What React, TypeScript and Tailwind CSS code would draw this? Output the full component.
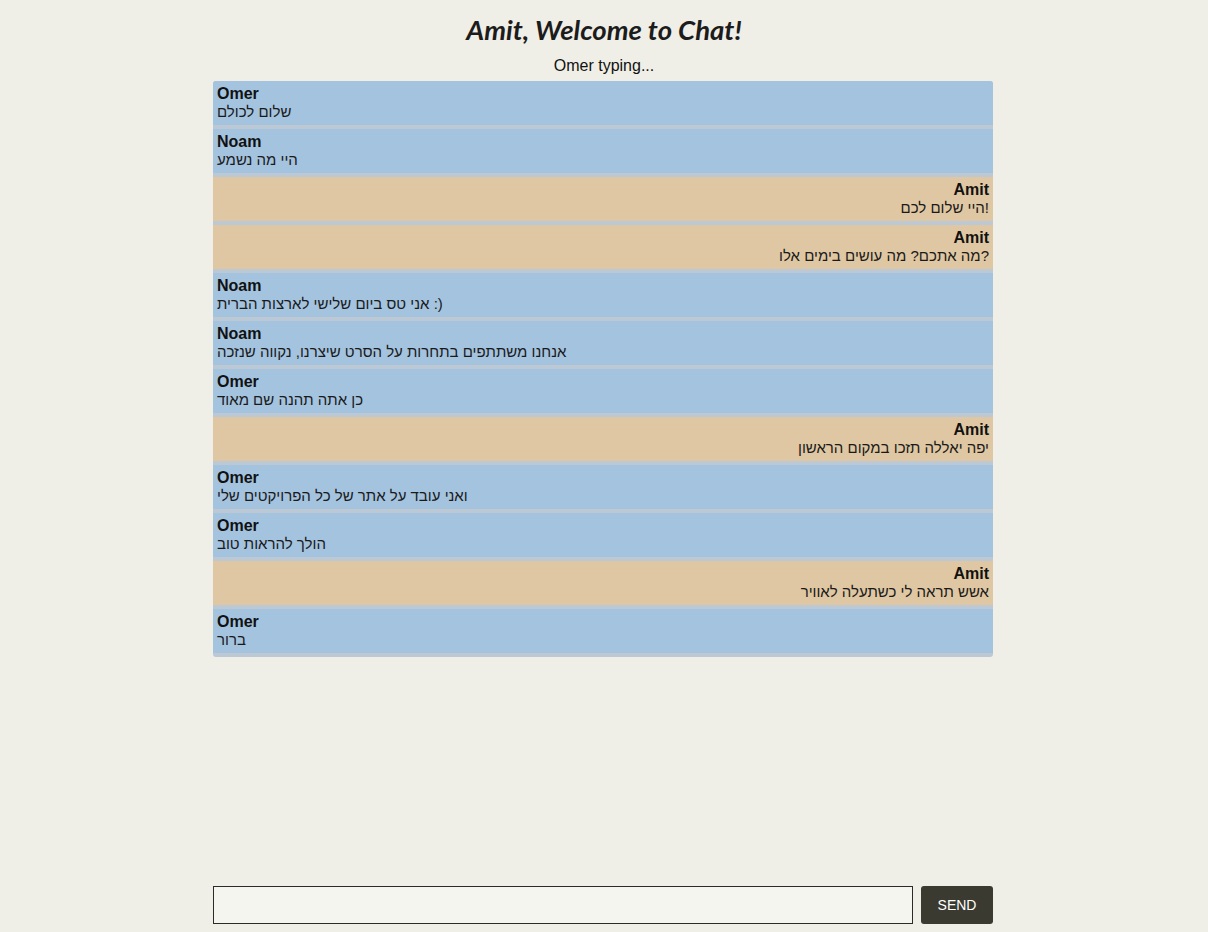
import React from "react";

type Msg = { name: string; text: string; mine: boolean };

const messages: Msg[] = [
  { name: "Omer", text: "שלום לכולם", mine: false },
  { name: "Noam", text: "היי מה נשמע", mine: false },
  { name: "Amit", text: "היי שלום לכם!", mine: true },
  { name: "Amit", text: "מה אתכם? מה עושים בימים אלו?", mine: true },
  { name: "Noam", text: "אני טס ביום שלישי לארצות הברית :)", mine: false },
  { name: "Noam", text: "אנחנו משתתפים בתחרות על הסרט שיצרנו, נקווה שנזכה", mine: false },
  { name: "Omer", text: "כן אתה תהנה שם מאוד", mine: false },
  { name: "Amit", text: "יפה יאללה תזכו במקום הראשון", mine: true },
  { name: "Omer", text: "ואני עובד על אתר של כל הפרויקטים שלי", mine: false },
  { name: "Omer", text: "הולך להראות טוב", mine: false },
  { name: "Amit", text: "אשש תראה לי כשתעלה לאוויר", mine: true },
  { name: "Omer", text: "ברור", mine: false },
];

export default function App() {
  return (
    <div
      className="h-screen bg-[#f0efe7] flex flex-col items-center text-[#1a1a1a]"
      style={{ fontFamily: '"Liberation Sans", Arial, "Noto Sans Hebrew", sans-serif' }}
    >
      <h1
        className="pt-[12px] text-[27.5px] leading-[36px] font-bold italic text-[#1c1c1c]"
        style={{ fontFamily: 'Lato, "Noto Sans", sans-serif' }}
      >
        Amit, Welcome to Chat!
      </h1>
      <div className="mt-[9px] text-[16px] leading-[18px] text-[#111]">Omer typing...</div>
      <ul className="mt-[6px] w-[780px] -translate-x-px bg-[#bcc8d4] rounded-[3px] overflow-hidden pb-[4px] flex flex-col gap-[4px]">
        {messages.map((m, i) => (
          <li
            key={i}
            className={
              m.mine
                ? "bg-[#dfc7a3] px-[4px] py-[4px] text-right"
                : "bg-[#a4c3df] px-[4px] py-[4px] text-left"
            }
          >
            <div className="font-bold text-[16px] leading-[18px] text-[#111]">{m.name}</div>
            <div className="text-[15px] leading-[18px] text-[#1a1a1a]">{m.text}</div>
          </li>
        ))}
      </ul>
      <div className="flex-1" />
      <form
        className="mb-[8px] w-[780px] -translate-x-px flex gap-[8px]"
        onSubmit={(e) => e.preventDefault()}
      >
        <input
          type="text"
          className="w-[700px] h-[38px] bg-[#f3f5ee] border border-[#2b2b28] outline-none px-2"
        />
        <button
          type="submit"
          className="w-[72px] h-[38px] bg-[#3a3a30] text-white text-[14px] rounded-[3px]"
        >
          SEND
        </button>
      </form>
    </div>
  );
}
